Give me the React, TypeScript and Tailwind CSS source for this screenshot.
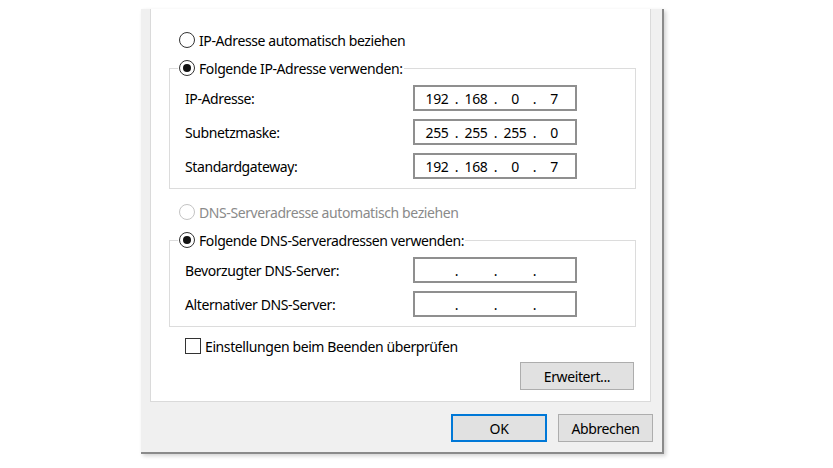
import type { ReactNode } from 'react';

function Radio({ checked, disabled }: { checked?: boolean; disabled?: boolean }) {
  return (
    <span
      className={`w-[16px] h-[16px] rounded-full border bg-white flex items-center justify-center shrink-0 ${
        disabled ? 'border-[#c4c4c4]' : 'border-[#333333]'
      }`}
    >
      {checked && <span className="w-[8px] h-[8px] rounded-full bg-[#111111]" />}
    </span>
  );
}

function IpBox({ parts }: { parts: string[] }) {
  return (
    <div className="w-[164px] h-[26px] border-2 border-[#8f8f8f] bg-white flex items-center pl-[6px]">
      {parts.map((p, i) => (
        <div key={i} className="flex">
          <span className="w-[32px] text-center">{p}</span>
          {i < 3 && <span className="w-[7px] text-center">.</span>}
        </div>
      ))}
    </div>
  );
}

function Row({ label, parts }: { label: string; parts: string[] }) {
  return (
    <div className="flex items-center h-[26px]">
      <span className="w-[228px]">{label}</span>
      <IpBox parts={parts} />
    </div>
  );
}

function Group({ legend, children }: { legend: ReactNode; children: ReactNode }) {
  return (
    <fieldset className="border border-[#dcdcdc] p-0 m-0">
      <legend className="ml-[8px] px-[1px] h-[20px] flex items-center gap-[4px]">{legend}</legend>
      <div className="pl-[15px] pt-[7px] pb-[9px] flex flex-col gap-[8px]">{children}</div>
    </fieldset>
  );
}

export default function App() {
  const empty = ['', '', '', ''];
  return (
    <div className="w-[833px] h-[468px] bg-white overflow-hidden font-['Noto_Sans',sans-serif] text-[14px] tracking-[-0.4px] text-black">
      {/* dialog window */}
      <div className="ml-[141px] mt-[9px] w-[523px] h-[445px] bg-[#f0f0f0] border-r-2 border-b-2 border-[#8a8a8a] shadow-[2px_2px_4px_rgba(0,0,0,0.18)] flex flex-col pl-[9px]">
        <div className="mr-[11px] h-[393px] bg-white border border-t-0 border-[#dadada] pl-[18px] pr-[14px] flex flex-col">
          <div className="mt-[21px] h-[20px] ml-[10px] flex items-center gap-[4px]">
            <Radio />
            <span>IP-Adresse automatisch beziehen</span>
          </div>

          <div className="mt-[8px]">
            <Group
              legend={
                <>
                  <Radio checked />
                  <span>Folgende IP-Adresse verwenden:</span>
                </>
              }
            >
              <Row label="IP-Adresse:" parts={['192', '168', '0', '7']} />
              <Row label="Subnetzmaske:" parts={['255', '255', '255', '0']} />
              <Row label="Standardgateway:" parts={['192', '168', '0', '7']} />
            </Group>
          </div>

          <div className="mt-[13px] h-[20px] ml-[10px] flex items-center gap-[4px] text-[#8a8a8a]">
            <Radio disabled />
            <span>DNS-Serveradresse automatisch beziehen</span>
          </div>

          <div className="mt-[8px]">
            <Group
              legend={
                <>
                  <Radio checked />
                  <span>Folgende DNS-Serveradressen verwenden:</span>
                </>
              }
            >
              <Row label="Bevorzugter DNS-Server:" parts={empty} />
              <Row label="Alternativer DNS-Server:" parts={empty} />
            </Group>
          </div>

          <div className="mt-[9px] h-[20px] ml-[16px] flex items-center gap-[4px]">
            <span className="w-[16px] h-[16px] border border-[#333333] bg-white shrink-0" />
            <span>Einstellungen beim Beenden überprüfen</span>
          </div>

          <div className="mt-[6px] mr-[2px] self-end w-[114px] h-[28px] border border-[#adadad] bg-[#e1e1e1] flex items-center justify-center">
            Erweitert...
          </div>
        </div>

        <div className="mt-[12px] pr-[9px] flex justify-end gap-[11px]">
          <div className="w-[96px] h-[28px] border-2 border-[#0078d7] bg-[#e1e1e1] flex items-center justify-center">
            OK
          </div>
          <div className="w-[95px] h-[28px] border border-[#adadad] bg-[#e1e1e1] flex items-center justify-center">
            Abbrechen
          </div>
        </div>
      </div>
    </div>
  );
}
